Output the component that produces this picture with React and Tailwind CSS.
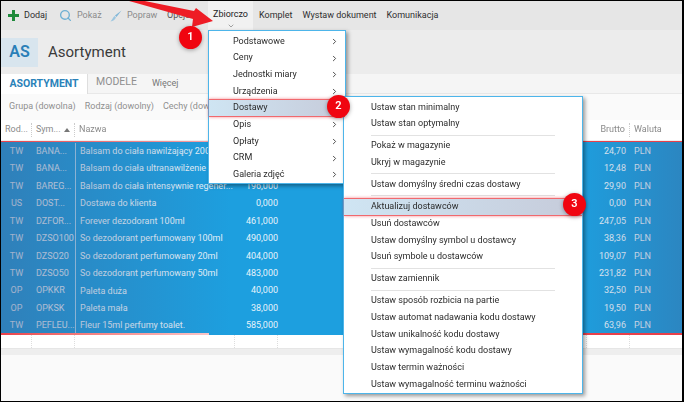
import { ChevronRight, ChevronDown, Search } from 'lucide-react';

const rows = [
  ['TW', 'BANA...', 'Balsam do ciała nawilżający 200', '', '24,70'],
  ['TW', 'BANA...', 'Balsam do ciała ultranawilżenie i', '', '12,48'],
  ['TW', 'BAREG...', 'Balsam do ciała intensywnie regener...', '196,000', '29,90'],
  ['US', 'DOST...', 'Dostawa do klienta', '0,000', '0,00'],
  ['TW', 'DZFOR...', 'Forever dezodorant 100ml', '461,000', '247,05'],
  ['TW', 'DZSO100', 'So dezodorant perfumowany 100ml', '490,000', '38,36'],
  ['TW', 'DZSO20', 'So dezodorant perfumowany 20ml', '404,000', '109,07'],
  ['TW', 'DZSO50', 'So dezodorant perfumowany 50ml', '483,000', '231,82'],
  ['OP', 'OPKKR', 'Paleta duża', '40,000', '32,50'],
  ['OP', 'OPKSK', 'Paleta mała', '38,000', '19,50'],
  ['TW', 'PEFLEU...', 'Fleur 15ml perfumy toalet.', '585,000', '63,96'],
];

const subMenu = ['Podstawowe', 'Ceny', 'Jednostki miary', 'Urządzenia', 'Dostawy', 'Opis', 'Opłaty', 'CRM', 'Galeria zdjęć'];

const actionGroups = [
  ['Ustaw stan minimalny', 'Ustaw stan optymalny'],
  ['Pokaż w magazynie', 'Ukryj w magazynie'],
  ['Ustaw domyślny średni czas dostawy'],
  ['Aktualizuj dostawców', 'Usuń dostawców', 'Ustaw domyślny symbol u dostawcy', 'Usuń symbole u dostawców'],
  ['Ustaw zamiennik'],
  [
    'Ustaw sposób rozbicia na partie',
    'Ustaw automat nadawania kodu dostawy',
    'Ustaw unikalność kodu dostawy',
    'Ustaw wymagalność kodu dostawy',
    'Ustaw termin ważności',
    'Ustaw wymagalność terminu ważności',
  ],
];

const gridCols = 'grid grid-cols-[31px_43px_160px_43px_309px_43px_1fr]';

function Badge({ n, className }) {
  return (
    <div className={`absolute z-20 flex size-[23px] items-center justify-center rounded-full bg-[#f00510] text-[11px] font-semibold text-white shadow-[0_1px_4px_rgba(0,0,0,0.35)] ${className}`}>
      {n}
    </div>
  );
}

function Highlighted({ children }) {
  return (
    <div className="z-10 -my-[1px] flex h-[18.7px] items-center border-y border-[#f0696e] bg-gradient-to-r from-[#cfe5f3] to-[#c6cbda] shadow-[0_0_3px_rgba(240,60,70,0.6)]">
      {children}
    </div>
  );
}

function ToolItem({ icon, label, muted, className = '' }) {
  return (
    <div className={`flex items-center gap-[5px] ${muted ? 'text-[#8b8b8b]' : 'text-[#2f2f2f]'} ${className}`}>
      {icon}
      <span>{label}</span>
    </div>
  );
}

function Toolbar() {
  return (
    <div className="flex h-[29px] items-center bg-[#e6e6e6] pl-[7px] text-[9px]">
      <ToolItem
        className="w-[51px]"
        label="Dodaj"
        icon={
          <svg width="11" height="11" viewBox="0 0 11 11">
            <path d="M4 0h3v4h4v3H7v4H4V7H0V4h4z" fill="#1f8a3b" />
          </svg>
        }
      />
      <ToolItem className="w-[51px]" muted label="Pokaż" icon={<Search size={13} strokeWidth={2.5} className="text-[#6fb0d3]" />} />
      <ToolItem
        className="w-[57px]"
        muted
        label="Popraw"
        icon={
          <svg width="12" height="12" viewBox="0 0 12 12">
            <path d="M11.5 .5 5 5.5 6.5 7z" fill="#7fb6d8" />
            <path d="M4.5 6 6 7.5C5 10 3 11 .5 11.5 2 10 2.5 8 4.5 6z" fill="#9cc6e0" />
          </svg>
        }
      />
      <span className="w-[41px] text-[#555]">Opcje</span>
      <div className="relative flex h-full w-[45px] items-center justify-center bg-[#f1f1f1] pb-px text-[#222]">
        Zbiorczo
        <ChevronDown size={8} className="absolute bottom-0 text-[#777]" />
      </div>
      <span className="ml-1.5 text-[#2f2f2f]">Komplet</span>
      <span className="ml-2.5 text-[#2f2f2f]">Wystaw dokument</span>
      <span className="ml-2.5 text-[#2f2f2f]">Komunikacja</span>
    </div>
  );
}

function Header() {
  return (
    <div className="flex h-[44px] items-center bg-[#ececec]">
      <div className="flex h-[29px] w-[37px] items-center justify-center bg-[#d8e5ee] text-[16px] font-semibold text-[#2a7fb8]">AS</div>
      <span className="ml-[10px] text-[15px] text-[#3a3a3a]">Asortyment</span>
    </div>
  );
}

function Tabs() {
  return (
    <div className="flex h-[20px] items-end border-b border-[#e8e8e8] bg-[#f5f5f5] text-[10.5px]">
      <div className="-mb-px flex h-[20px] w-[87px] items-center justify-center border-r border-[#dedede] bg-white font-bold text-[#2a82b9]">ASORTYMENT</div>
      <span className="mb-[3px] ml-2 text-[#8f8f8f]">MODELE</span>
      <span className="mb-[3px] ml-[15px] text-[9px] text-[#777]">Więcej</span>
    </div>
  );
}

function Table() {
  return (
    <div className="relative">
      <div className={`${gridCols} h-[21px] items-center border-b border-[#eeeeee] bg-white text-[9px] text-[#8a8a8a]`}>
        <span className="border-r border-dotted border-[#ccc] pl-1">Rod...</span>
        <span className="flex items-center justify-between border-r border-dotted border-[#ccc] px-1">
          Sym...
          <svg width="6" height="4" viewBox="0 0 6 4">
            <path d="M3 0 6 4H0z" fill="#777" />
          </svg>
        </span>
        <span className="pl-1">Nazwa</span>
        <span />
        <span />
        <span className="border-r border-dotted border-[#ccc] pr-1 text-right">Brutto</span>
        <span className="pl-1">Waluta</span>
      </div>
      <div className="relative bg-[#1d9fdf] pt-[2px] text-[9px] text-[#e6f3fb]">
        {rows.map((r, i) => (
          <div key={i} className={`${gridCols} h-[17.45px] items-center`}>
            <span className="text-center">{r[0]}</span>
            <span className="pl-1 whitespace-nowrap">{r[1]}</span>
            <span className="h-full truncate border-l border-[#a9d8f2] pl-1 leading-[17.45px]">{r[2]}</span>
            <span className="text-right">{r[3]}</span>
            <span />
            <span className="pr-1 text-right">{r[4]}</span>
            <span className="pl-1">PLN</span>
          </div>
        ))}
        <div className="absolute inset-y-0 left-0 w-[230px] bg-gradient-to-r from-[rgba(70,90,140,0.45)] to-[rgba(70,90,140,0)]" />
        <div className="absolute inset-y-0 right-0 w-[110px] bg-gradient-to-l from-[rgba(70,90,140,0.36)] to-[rgba(70,90,140,0)]" />
        <div className="absolute left-0 top-0 h-px w-[208px] bg-gradient-to-r from-[#e8404a] to-[#f5a0a5]" />
        <div className="absolute right-0 top-0 h-px w-[100px] bg-[#e8404a]" />
        <div className="absolute bottom-0 left-0 h-[2px] w-[208px] bg-gradient-to-r from-[#e8404a] to-[#f9c5c8]" />
        <div className="absolute bottom-0 right-0 h-[2px] w-[100px] bg-[#e8404a]" />
      </div>
      <div className={`${gridCols} h-[14px] border-b border-[#e6e6e6] bg-white`}>
        <span className="border-r border-dotted border-[#ddd]" />
        <span className="border-r border-dotted border-[#ddd]" />
        <span className="border-r border-dotted border-[#ddd]" />
        <span className="border-r border-dotted border-[#ddd]" />
        <span className="border-r border-dotted border-[#ddd]" />
        <span className="border-r border-dotted border-[#ddd]" />
        <span />
      </div>
      <div className="h-[6px] bg-[#eeeeee]" />
    </div>
  );
}

function SubMenu() {
  return (
    <div className="absolute left-[207px] top-[29px] flex w-[138px] flex-col border border-[#4db5ea] bg-white pt-[2px] text-[9px] text-[#2b2b2b] shadow-[2px_2px_4px_rgba(0,0,0,0.4)]">
      {subMenu.map((label) =>
        label === 'Dostawy' ? (
          <Highlighted key={label}>
            <span className="ml-6">{label}</span>
          </Highlighted>
        ) : (
          <div key={label} className="flex h-[16.7px] items-center justify-between pl-6 pr-1.5">
            {label}
            <ChevronRight size={9} strokeWidth={2.5} className="text-[#444]" />
          </div>
        ),
      )}
    </div>
  );
}

function ActionMenu() {
  return (
    <div className="absolute left-[342px] top-[95px] flex w-[240px] flex-col border border-[#4db5ea] bg-white pt-[2px] text-[9px] text-[#2b2b2b] shadow-[2px_2px_4px_rgba(0,0,0,0.4)]">
      {actionGroups.map((group, g) => (
        <div key={g} className="flex flex-col">
          {g > 0 && <div className="mx-[27px] my-[2.2px] h-px bg-[#e2e2e2]" />}
          {group.map((label) =>
            label === 'Aktualizuj dostawców' ? (
              <Highlighted key={label}>
                <span className="ml-[27px]">{label}</span>
              </Highlighted>
            ) : (
              <div key={label} className="flex h-[16.7px] items-center pl-[27px]">
                {label}
              </div>
            ),
          )}
        </div>
      ))}
    </div>
  );
}

export default function App() {
  return (
    <div className="relative h-[402px] w-[684px] overflow-hidden border-y border-l border-r-2 border-black bg-[#fafafa] font-['Roboto','Noto_Sans',sans-serif]">
      <div className="blur-[0.35px]">
        <Toolbar />
        <Header />
        <Tabs />
        <div className="flex h-[26px] items-center gap-[9px] bg-[#fafafa] pl-2 text-[9px] text-[#8f8f8f]">
          <span>Grupa (dowolna)</span>
          <span>Rodzaj (dowolny)</span>
          <span>Cechy (dowolne)</span>
        </div>
        <Table />
        <SubMenu />
        <ActionMenu />
        <svg className="absolute left-0 top-0" width="240" height="40" viewBox="0 0 240 40">
          <path d="M121 -2 134 -2 193 10 195 7 212 20 191 26 192 18z" fill="#ee1c25" />
        </svg>
        <Badge n="1" className="left-[178px] top-[25px]" />
        <Badge n="2" className="left-[326px] top-[94px]" />
        <Badge n="3" className="left-[562px] top-[192px]" />
      </div>
    </div>
  );
}
